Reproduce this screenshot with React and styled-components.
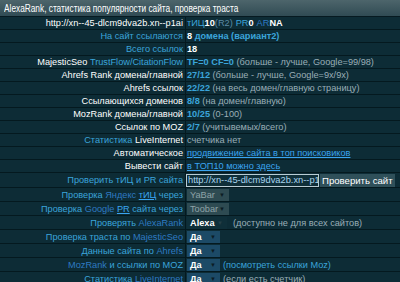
import React from "react";
import styled, { createGlobalStyle } from "styled-components";

const Global = createGlobalStyle`
  html, body { margin: 0; padding: 0; background: #0d2c36; }
  body { font-family: "Liberation Sans", Arial, sans-serif; font-size: 9.2px; color: #fff; }
`;

const Wrap = styled.div`
  width: 400px;
  background: #0d2c36;
`;

const Header = styled.div`
  height: 17px;
  display: flex;
  align-items: center;
  padding-left: 4px;
  color: #fff;
  background: linear-gradient(#4d656b, #304b54);
  border-bottom: 1px solid #061a21;
  box-sizing: border-box;
  overflow: hidden;
`;

const HeaderText = styled.span`
  font-size: 10px;
  white-space: nowrap;
  transform: scaleX(0.83);
  transform-origin: left center;
`;

const Row = styled.div`
  display: grid;
  grid-template-columns: 186px 1fr;
  height: ${(p) => p.$h || 13}px;
  border-bottom: 1px solid #04191f;
  box-sizing: border-box;
`;

const Label = styled.div`
  display: flex;
  align-items: center;
  justify-content: flex-end;
  padding-right: 2px;
  border-right: 1px solid #04191f;
  white-space: nowrap;
  color: ${(p) => (p.$blue ? "#3ba4da" : "#ffffff")};
`;

const Value = styled.div`
  display: flex;
  align-items: center;
  padding-left: ${(p) => (p.$pl ?? 1)}px;
  white-space: nowrap;
  overflow: hidden;
`;

const T = styled.span`
  color: ${(p) =>
    p.$c === "blue" ? "#3ba4da" :
    p.$c === "dark" ? "#2e7ac2" :
    p.$c === "gray" ? "#9aaeb6" :
    p.$c === "muted" ? "#5b8aa3" :
    "#ffffff"};
  font-weight: ${(p) => (p.$b ? "bold" : "normal")};
  margin-left: ${(p) => p.$ml || 0}px;
`;

const A = styled.a`
  color: #3aa4f0;
  text-decoration: underline;
`;

const Input = styled.input`
  width: 133px;
  height: 13px;
  margin: 0;
  border: 1px solid #b8ccd4;
  box-sizing: border-box;
  color: #a9d6f0;
  padding: 0 0 0 1px;
  background: #0f2f39;
  font-family: "Liberation Sans", Arial, sans-serif;
  font-size: 9.3px;
  outline: none;
`;

const Button = styled.div`
  height: 13px;
  margin-left: 1px;
  padding: 0 2px;
  background: #2f505a;
  color: #fff;
  display: flex;
  align-items: center;
  font-size: 9.6px;
`;

const Select = styled.div`
  width: ${(p) => p.$w}px;
  height: 12px;
  box-sizing: border-box;
  display: flex;
  align-items: center;
  justify-content: space-between;
  padding: 0 4px 0 3px;
  background: ${(p) => p.$bg};
  color: ${(p) => p.$fg};
  font-weight: ${(p) => (p.$b ? "bold" : "normal")};
`;

const Arrow = styled.span`
  font-size: 6px;
  color: ${(p) => p.$c || "#0b1c24"};
`;

const Note = styled.span`
  color: ${(p) => (p.$blue ? "#3aa4da" : "#9aaeb6")};
  margin-left: ${(p) => p.$ml || 3}px;
`;

const greySel = { $bg: "#2e4b52", $fg: "#8fa3a8" };
const blueSel = { $bg: "#1c4a66", $fg: "#ffffff", $b: true };

export default function App() {
  return (
    <Wrap>
      <Global />
      <Header>
        <HeaderText>AlexaRank, статистика популярности сайта, проверка траста</HeaderText>
      </Header>

      <Row>
        <Label>http://xn--45-dlcm9dva2b.xn--p1ai</Label>
        <Value>
          <T $c="blue">тИЦ</T><T $b>10</T><T $c="muted">(R2)</T>
          <T $c="blue" $ml={3}>PR</T><T $b>0</T>
          <T $c="dark" $ml={3}>AR</T><T $b>NA</T>
        </Value>
      </Row>
      <Row>
        <Label $blue>На сайт ссылаются</Label>
        <Value><T $b>8</T><T $c="blue" $b>&nbsp;домена (вариант2)</T></Value>
      </Row>
      <Row>
        <Label $blue>Всего ссылок</Label>
        <Value><T $b>18</T></Value>
      </Row>
      <Row>
        <Label>MajesticSeo&nbsp;<T $c="blue">TrustFlow/CitationFlow</T></Label>
        <Value><T $c="blue" $b>TF=0 CF=0</T><T $c="gray">&nbsp;(больше - лучше, Google=99/98)</T></Value>
      </Row>
      <Row>
        <Label>Ahrefs Rank домена/главной</Label>
        <Value><T $c="blue" $b>27/12</T><T $c="gray">&nbsp;(больше - лучше, Google=9x/9x)</T></Value>
      </Row>
      <Row>
        <Label>Ahrefs ссылок</Label>
        <Value><T $c="blue" $b>22/22</T><T $c="gray">&nbsp;(на весь домен/главную страницу)</T></Value>
      </Row>
      <Row>
        <Label>Ссылающихся доменов</Label>
        <Value><T $c="blue" $b>8/8</T><T $c="gray">&nbsp;(на домен/главную)</T></Value>
      </Row>
      <Row>
        <Label>MozRank домена/главной</Label>
        <Value><T $c="blue" $b>10/25</T><T $c="gray">&nbsp;(0-100)</T></Value>
      </Row>
      <Row>
        <Label>Ссылок по MOZ</Label>
        <Value><T $c="blue" $b>2/7</T><T $c="gray">&nbsp;(учитывемых/всего)</T></Value>
      </Row>
      <Row>
        <Label><T $c="blue">Статистика</T>&nbsp;<T>LiveInternet</T></Label>
        <Value><T $c="gray">счетчика нет</T></Value>
      </Row>
      <Row>
        <Label>Автоматическое</Label>
        <Value><A href="#">продвижение сайта в топ поисковиков</A></Value>
      </Row>
      <Row>
        <Label>Вывести сайт</Label>
        <Value><A href="#">в ТОП10 можно здесь</A></Value>
      </Row>
      <Row $h={15}>
        <Label $blue>Проверить тИЦ и PR сайта</Label>
        <Value $pl={0}>
          <Input readOnly value="http://xn--45-dlcm9dva2b.xn--p1" />
          <Button>Проверить сайт</Button>
        </Value>
      </Row>
      <Row $h={14}>
        <Label><T $c="blue">Проверка</T>&nbsp;<T $c="dark">Яндекс</T>&nbsp;<A as="span">тИЦ</A>&nbsp;<T $c="blue">через</T></Label>
        <Value $pl={1}><Select $w={42} {...greySel}>YaBar<Arrow>▼</Arrow></Select></Value>
      </Row>
      <Row $h={14}>
        <Label><T $c="blue">Проверка</T>&nbsp;<T $c="dark">Google</T>&nbsp;<A as="span">PR</A>&nbsp;<T $c="blue">сайта через</T></Label>
        <Value $pl={1}><Select $w={42} {...greySel}>Toobar<Arrow>▼</Arrow></Select></Value>
      </Row>
      <Row $h={14}>
        <Label><T $c="blue">Проверять</T>&nbsp;<T $c="dark">AlexaRank</T></Label>
        <Value $pl={1}>
          <Select $w={40} $bg="#0f2f39" $fg="#fff" $b>Alexa<Arrow $c="#24404a">▼</Arrow></Select>
          <Note $ml={6}>(доступно не для всех сайтов)</Note>
        </Value>
      </Row>
      <Row $h={14}>
        <Label><T $c="blue">Проверка траста по</T>&nbsp;<T $c="dark">MajesticSeo</T></Label>
        <Value $pl={1}><Select $w={33} {...blueSel}>Да<Arrow>▼</Arrow></Select></Value>
      </Row>
      <Row $h={14}>
        <Label><T $c="blue">Данные сайта по</T>&nbsp;<T $c="dark">Ahrefs</T></Label>
        <Value $pl={1}><Select $w={33} {...blueSel}>Да<Arrow>▼</Arrow></Select></Value>
      </Row>
      <Row $h={14}>
        <Label><T $c="dark">MozRank</T>&nbsp;<T $c="blue">и ссылки по MOZ</T></Label>
        <Value $pl={1}>
          <Select $w={33} {...blueSel}>Да<Arrow>▼</Arrow></Select>
          <Note $blue>(посмотреть ссылки Moz)</Note>
        </Value>
      </Row>
      <Row $h={14}>
        <Label><T $c="blue">Статистика</T>&nbsp;<T $c="dark">LiveInternet</T></Label>
        <Value $pl={1}>
          <Select $w={33} {...blueSel}>Да<Arrow>▼</Arrow></Select>
          <Note>(если есть счетчик)</Note>
        </Value>
      </Row>
    </Wrap>
  );
}
